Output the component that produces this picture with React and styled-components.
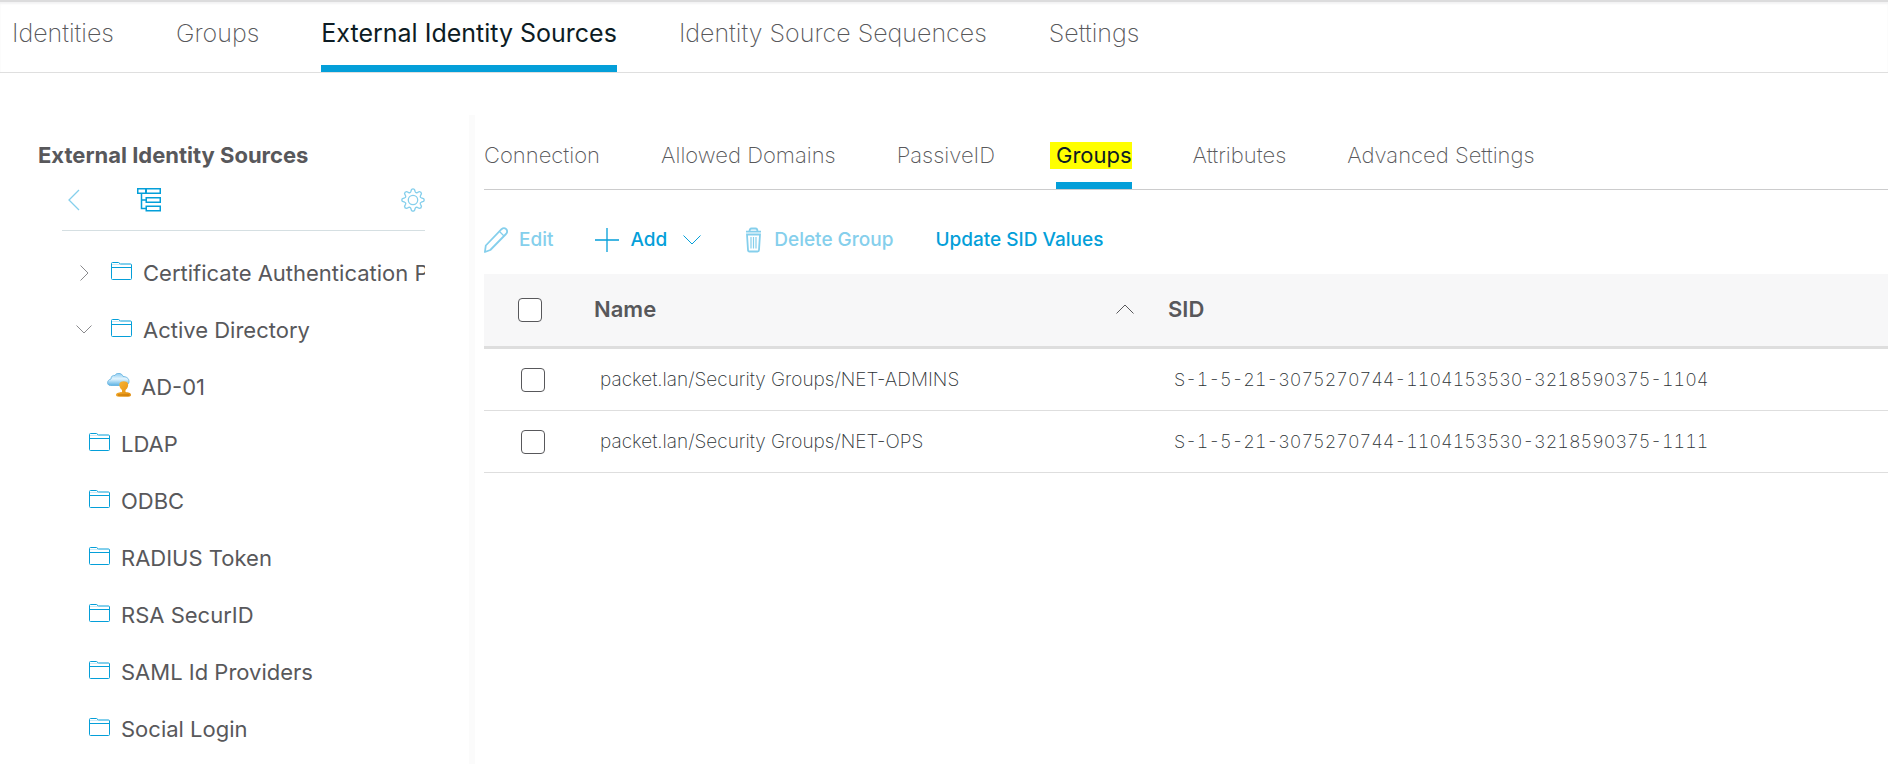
import React, { useState } from 'react';
import styled, { createGlobalStyle } from 'styled-components';

const GlobalStyle = createGlobalStyle`
  * {
    box-sizing: border-box;
  }

  body {
    margin: 0;
    background: #fff;
    color: #58585b;
    font-family: Inter, "Liberation Sans", sans-serif;
    font-size: 22px;
    line-height: 24px;
  }

  button {
    font: inherit;
    color: inherit;
    background: none;
    border: none;
    padding: 0;
    cursor: pointer;
  }

  svg {
    display: block;
    flex: none;
  }
`;

const Page = styled.div`
  display: flex;
  flex-direction: column;
  min-height: 100vh;
`;

const TopNav = styled.nav`
  display: flex;
  gap: 62px;
  padding: 0 12px;
  border-top: 2px solid #dcdcdd;
  border-bottom: 1px solid #dfdfdf;
  box-shadow: inset 0 2px 2px #f3f3f4;
`;

const TopTab = styled.a`
  display: flex;
  height: 70px;
  padding-top: 17px;
  border-bottom: 7px solid ${(props) => (props.$active ? '#049fd9' : 'transparent')};
  color: ${(props) => (props.$active ? '#0d1c24' : '#58585b')};
  font-size: 25px;
  font-weight: ${(props) => (props.$active ? 400 : 200)};
  line-height: 28px;
  text-decoration: none;
  white-space: nowrap;
`;

const Body = styled.div`
  display: flex;
  flex: 1;
  padding-top: 42px;
`;

const Sidebar = styled.aside`
  flex: none;
  width: 475px;
  padding: 28px 44px 0 38px;
  border-right: 6px solid #fbfbfb;
`;

const SidebarTitle = styled.h2`
  margin: 0;
  font-size: 22px;
  font-weight: 700;
  line-height: 24px;
  white-space: nowrap;
`;

const SidebarTools = styled.div`
  display: flex;
  align-items: center;
  height: 64px;
  margin-left: 24px;
  padding-top: 3px;
  padding-left: 3px;
  border-bottom: 1px solid #d5dfe2;
`;

const ToolButton = styled.button`
  color: ${(props) => (props.$faded ? '#85cfec' : '#049fd9')};
  margin-left: ${(props) => (props.$last ? 'auto' : '0')};
  margin-right: ${(props) => (props.$first ? '56px' : '0')};
`;

const Tree = styled.ul`
  list-style: none;
  margin: 0;
  padding: 13px 0 0 36px;
`;

const TreeItem = styled.li`
  display: flex;
  align-items: center;
  height: 57px;
  padding-left: ${(props) => props.$indent}px;
  overflow: hidden;
`;

const Expander = styled.button`
  flex: none;
  width: 20px;
  margin-right: 17px;
  color: #8a8a8d;

  svg {
    margin: 0 auto;
  }
`;

const TreeLink = styled.a`
  display: flex;
  align-items: center;
  gap: 10px;
  color: #58585b;
  text-decoration: none;
  white-space: nowrap;

  svg {
    margin-bottom: 4px;
  }
`;

const Main = styled.main`
  flex: 1;
  min-width: 0;
  padding-left: 9px;
`;

const Tabs = styled.div`
  display: flex;
  gap: 61px;
  height: 75px;
  border-bottom: 1px solid #cccccd;
`;

const Tab = styled.button`
  display: flex;
  align-items: flex-start;
  padding-top: 28px;
  border-bottom: 7px solid ${(props) => (props.$active ? '#049fd9' : 'transparent')};
  color: ${(props) => (props.$active ? '#0d1c24' : '#58585b')};
  font-weight: ${(props) => (props.$active ? 400 : 200)};
  white-space: nowrap;
`;

const Highlight = styled.mark`
  margin: -1px 0 0 -6px;
  padding: 1px 0 2px 6px;
  background: #ffff00;
  color: inherit;
`;

const Toolbar = styled.div`
  display: flex;
  align-items: center;
  gap: 42px;
  height: 84px;
  padding-top: 16px;
`;

const Action = styled.button`
  display: flex;
  align-items: center;
  gap: 11px;
  height: 28px;
  color: ${(props) => (props.disabled ? '#85cfec' : '#049fd9')};
  font-size: 19px;
  font-weight: 500;
  white-space: nowrap;

  svg + span + svg {
    margin-left: 5px;
  }
`;

const Table = styled.table`
  width: 100%;
  border-collapse: separate;
  border-spacing: 0;
  table-layout: fixed;
`;

const CheckCol = styled.col`
  width: 110px;
`;

const NameCol = styled.col`
  width: 574px;
`;

const HeadCell = styled.th`
  height: 75px;
  padding: 0 34px 3px 0;
  background: #f7f7f8;
  border-bottom: 3px solid #dedede;
  text-align: left;
  font-weight: 600;
`;

const HeadCheckCell = styled(HeadCell)`
  padding: 0 0 0 34px;
`;

const SortButton = styled.button`
  display: flex;
  align-items: center;
  justify-content: space-between;
  width: 100%;
  font-weight: 600;
`;

const Cell = styled.td`
  height: 62px;
  padding: 0 0 0 6px;
  border-bottom: 1px solid #dedede;
  color: #2b3134;
  font-size: 19px;
  font-weight: 200;
  white-space: nowrap;
`;

const CheckCell = styled(Cell)`
  padding-left: 37px;
`;

const SidCell = styled(Cell)`
  font-size: 18px;
  font-variant-numeric: tabular-nums;
`;

const Checkbox = styled.input.attrs({ type: 'checkbox' })`
  appearance: none;
  display: block;
  width: 24px;
  height: 24px;
  margin: 0;
  border: 1px solid #58585b;
  border-radius: 4px;
  background: #fff;

  &:checked {
    background: #049fd9;
    border-color: #049fd9;
  }
`;

const FolderIcon = () => (
  <svg width="22" height="18" viewBox="0 0 22 18" fill="none" stroke="#049fd9">
    <path d="M1 2.500H9" stroke="#c9eaf8" />
    <path d="M0.500 16.500V1.500Q0.500 0.500 1.500 0.500H7.500L9.500 2H19.500Q20.500 2 20.500 3V16.500Q20.500 17.500 19.500 17.500H1.500Q0.500 17.500 0.500 16.500Z" />
    <path d="M0.500 5.500H20.500" />
  </svg>
);

const CloudUserIcon = () => (
  <svg width="24" height="24" viewBox="0 0 24 24">
    <defs>
      <linearGradient id="cloud" x1="0" y1="0" x2="0" y2="1">
        <stop offset="0" stopColor="#8ccbf0" />
        <stop offset="0.450" stopColor="#e4f5fe" />
        <stop offset="1" stopColor="#5bb2e4" />
      </linearGradient>
      <linearGradient id="person" x1="0" y1="0" x2="1" y2="1">
        <stop offset="0" stopColor="#fbb83a" />
        <stop offset="1" stopColor="#e08a0a" />
      </linearGradient>
    </defs>
    <path d="M3.500 12.500C-0.500 12.500-0.500 7 4 6C4 3 6 2 8 2.500C9-0.500 15-0.500 16 3.500C19 3.500 22 5 22 8.500C22 11.500 19 12.500 16 12.500Z" fill="url(#cloud)" stroke="#5fb0de" strokeWidth="0.800" />
    <path d="M15 17C12.500 15 12 12.500 12.500 10.500C13.500 7.500 20 7.500 21 10.500C21.500 12.500 21 15 18.500 17V19C21 19.500 24 19.500 24 22C24 24 21 23.800 17 23.800C12 23.800 9 24 9 22C9 19.500 13 19.500 15 19Z" fill="url(#person)" />
    <path d="M11 22H22" stroke="#c47607" />
  </svg>
);

const ChevronIcon = ({ width, height, points, strokeWidth = 1 }) => (
  <svg width={width} height={height} viewBox={`0 0 ${width} ${height}`} fill="none" stroke="currentColor" strokeWidth={strokeWidth}>
    <polyline points={points} />
  </svg>
);

const TreeIcon = () => (
  <svg width="24" height="24" viewBox="0 0 24 24" fill="none" stroke="currentColor" strokeWidth="1.500">
    <rect x="0.750" y="0.750" width="8" height="4.500" />
    <rect x="9.250" y="0.750" width="14" height="4.500" />
    <rect x="9.250" y="9.750" width="14" height="4.500" />
    <rect x="9.250" y="18.250" width="14" height="4.500" />
    <path d="M4.500 5V20.500H9M4.500 12H9" />
  </svg>
);

const gearPoints = () => {
  const parts = [];
  for (let i = 0; i < 8; i += 1) {
    const at = (deg, r) => {
      const a = ((i * 45 + deg) * Math.PI) / 180;
      return `${(12 + r * Math.sin(a)).toFixed(2)} ${(12 - r * Math.cos(a)).toFixed(2)}`;
    };
    parts.push(`${i ? 'L' : 'M'}${at(-15, 8.6)}L${at(-8, 10.6)}Q${at(0, 11.8)} ${at(8, 10.6)}L${at(15, 8.6)}Q${at(22.5, 7.4)} ${at(30, 8.6)}`);
  }
  return `${parts.join('')}Z`;
};

const GearIcon = () => (
  <svg width="24" height="24" viewBox="0 0 24 24" fill="none" stroke="currentColor" strokeWidth="1.300" strokeLinejoin="round">
    <path d={gearPoints()} />
    <circle cx="12" cy="12" r="4.700" />
  </svg>
);

const PencilIcon = () => (
  <svg width="24" height="26" viewBox="0 0 24 26" fill="none" stroke="currentColor" strokeWidth="1.800" strokeLinejoin="round">
    <path d="M0.900 25L1.800 18.500L17.500 2.200Q20 0 22.200 2.200Q24.200 4.500 22 7L6.300 23Z" />
    <path d="M15.500 4.500L20 9" strokeWidth="1.200" />
  </svg>
);

const PlusIcon = () => (
  <svg width="24" height="26" viewBox="0 0 24 26" stroke="currentColor" strokeWidth="1.300">
    <path d="M12 1V25M0 13H24" />
  </svg>
);

const TrashIcon = () => (
  <svg width="20" height="26" viewBox="-3 0 20 26" fill="none" stroke="currentColor" strokeWidth="1.800">
    <path d="M0 4.700H15M3.500 4.500Q3.500 1.500 5.500 1.500H9.500Q11.500 1.500 11.500 4.500" />
    <path d="M1 7.500H14L13 23Q13 24.500 11.500 24.500H3.500Q2 24.500 2 23Z" />
    <path d="M5 10V21.500M7.500 10V21.500M10 10V21.500" strokeWidth="1.200" />
  </svg>
);

const topTabs = ['Identities', 'Groups', 'External Identity Sources', 'Identity Source Sequences', 'Settings'];

const tabs = ['Connection', 'Allowed Domains', 'PassiveID', 'Groups', 'Attributes', 'Advanced Settings'];

const sources = [
  { name: 'Certificate Authentication Profile', state: 'closed', indent: 0 },
  { name: 'Active Directory', state: 'open', indent: 0 },
  { name: 'AD-01', joinPoint: true, indent: 33 },
  { name: 'LDAP', indent: 15 },
  { name: 'ODBC', indent: 15 },
  { name: 'RADIUS Token', indent: 15 },
  { name: 'RSA SecurID', indent: 15 },
  { name: 'SAML Id Providers', indent: 15 },
  { name: 'Social Login', indent: 15 },
];

const groups = [
  { name: 'packet.lan/Security Groups/NET-ADMINS', sid: 'S-1-5-21-3075270744-1104153530-3218590375-1104' },
  { name: 'packet.lan/Security Groups/NET-OPS', sid: 'S-1-5-21-3075270744-1104153530-3218590375-1111' },
];

const SourceTree = () => (
  <Sidebar>
    <SidebarTitle>External Identity Sources</SidebarTitle>
    <SidebarTools>
      <ToolButton $faded $first aria-label="Back">
        <ChevronIcon width={16} height={22} points="14,1 4,11 14,21" strokeWidth={1.3} />
      </ToolButton>
      <ToolButton aria-label="Tree view">
        <TreeIcon />
      </ToolButton>
      <ToolButton $faded $last aria-label="Settings">
        <GearIcon />
      </ToolButton>
    </SidebarTools>
    <Tree>
      {sources.map((source) => (
        <TreeItem key={source.name} $indent={source.indent}>
          {source.state && (
            <Expander aria-label={source.name} aria-expanded={source.state === 'open'}>
              {source.state === 'open' ? (
                <ChevronIcon width={16} height={9} points="0.5,0.5 8,8 15.5,0.5" />
              ) : (
                <ChevronIcon width={9} height={16} points="0.5,0.5 8,8 0.5,15.5" />
              )}
            </Expander>
          )}
          <TreeLink href="#">
            {source.joinPoint ? <CloudUserIcon /> : <FolderIcon />}
            {source.name}
          </TreeLink>
        </TreeItem>
      ))}
    </Tree>
  </Sidebar>
);

const App = () => {
  const [tab, setTab] = useState('Groups');
  const [selected, setSelected] = useState([]);

  const toggle = (sid) => {
    setSelected((prev) => (prev.includes(sid) ? prev.filter((s) => s !== sid) : [...prev, sid]));
  };

  const toggleAll = () => {
    setSelected((prev) => (prev.length === groups.length ? [] : groups.map((g) => g.sid)));
  };

  return (
    <Page>
      <GlobalStyle />
      <TopNav>
        {topTabs.map((name) => (
          <TopTab key={name} href="#" $active={name === 'External Identity Sources'}>
            {name}
          </TopTab>
        ))}
      </TopNav>
      <Body>
        <SourceTree />
        <Main>
          <Tabs role="tablist">
            {tabs.map((name) => (
              <Tab key={name} role="tab" aria-selected={name === tab} $active={name === tab} onClick={() => setTab(name)}>
                {name === tab ? <Highlight>{name}</Highlight> : name}
              </Tab>
            ))}
          </Tabs>
          <Toolbar>
            <Action disabled={selected.length !== 1}>
              <PencilIcon />
              <span>Edit</span>
            </Action>
            <Action>
              <PlusIcon />
              <span>Add</span>
              <ChevronIcon width={18} height={10} points="0.5,0.5 9,9 17.5,0.5" />
            </Action>
            <Action disabled={selected.length === 0}>
              <TrashIcon />
              <span>Delete Group</span>
            </Action>
            <Action>Update SID Values</Action>
          </Toolbar>
          <Table>
            <colgroup>
              <CheckCol />
              <NameCol />
              <col />
            </colgroup>
            <thead>
              <tr>
                <HeadCheckCell>
                  <Checkbox aria-label="Select all" checked={selected.length === groups.length} onChange={toggleAll} />
                </HeadCheckCell>
                <HeadCell>
                  <SortButton>
                    Name
                    <ChevronIcon width={18} height={10} points="0.5,9.5 9,1 17.5,9.5" />
                  </SortButton>
                </HeadCell>
                <HeadCell>SID</HeadCell>
              </tr>
            </thead>
            <tbody>
              {groups.map((group) => (
                <tr key={group.sid}>
                  <CheckCell>
                    <Checkbox aria-label={group.name} checked={selected.includes(group.sid)} onChange={() => toggle(group.sid)} />
                  </CheckCell>
                  <Cell>{group.name}</Cell>
                  <SidCell>{group.sid}</SidCell>
                </tr>
              ))}
            </tbody>
          </Table>
        </Main>
      </Body>
    </Page>
  );
};

export default App;
